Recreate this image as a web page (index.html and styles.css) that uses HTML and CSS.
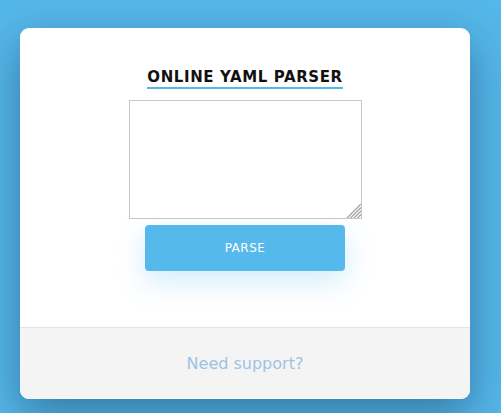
FILE: index.html
```html
<!DOCTYPE html>
<html>
<head>
<meta charset="utf-8">
<link rel="stylesheet" href="styles.css">
</head>
<body>
<div class="card">
  <div class="main">
    <h1 class="title">ONLINE YAML PARSER</h1>
    <div class="field">
      <textarea class="input"></textarea>
      <svg class="grip" width="15" height="15" viewBox="0 0 15 15">
        <g stroke="#a9a9a9" stroke-width="1.5">
          <line x1="1" y1="15" x2="15" y2="1"/>
          <line x1="4.5" y1="15" x2="15" y2="4.5"/>
          <line x1="8" y1="15" x2="15" y2="8"/>
          <line x1="11.5" y1="15" x2="15" y2="11.5"/>
        </g>
      </svg>
    </div>
    <button class="parse">PARSE</button>
  </div>
  <div class="footer">
    <a class="support">Need support?</a>
  </div>
</div>
</body>
</html>
```
FILE: styles.css
```css
html, body {
  margin: 0;
  height: 100%;
}
body {
  background: #55b7e9;
  font-family: "DejaVu Sans", sans-serif;
  padding: 28px 0 0 20px;
  box-sizing: border-box;
  overflow: hidden;
}
.card {
  width: 450px;
  background: #fff;
  border-radius: 9px;
  overflow: hidden;
  box-shadow: 0 16px 45px rgba(0, 30, 60, 0.4);
}
.main {
  display: flex;
  flex-direction: column;
  align-items: center;
  padding: 40px 0 56px;
}
.title {
  margin: 0;
  font-size: 15px;
  font-weight: bold;
  letter-spacing: 0.6px;
  color: #111;
  line-height: 18px;
  padding-bottom: 1px;
  border-bottom: 2px solid #55b7e9;
}
.field {
  position: relative;
  margin-top: 11px;
  width: 233px;
  height: 119px;
}
.input {
  display: block;
  width: 100%;
  height: 100%;
  box-sizing: border-box;
  border: 1px solid #c9c6c2;
  padding: 4px;
  resize: none;
  font-family: "DejaVu Sans", sans-serif;
}
.grip {
  position: absolute;
  right: 1px;
  bottom: 1px;
  background: #fff;
}
.parse {
  margin-top: 6px;
  width: 200px;
  height: 46px;
  border: none;
  border-radius: 4px;
  background: #56b9ec;
  color: #fff;
  font-family: "DejaVu Sans", sans-serif;
  font-size: 12px;
  letter-spacing: 0.5px;
  box-shadow: 0 10px 28px rgba(86, 185, 236, 0.28);
}
.footer {
  height: 71px;
  background: #f4f4f4;
  border-top: 1px solid #dde5ed;
  display: flex;
  align-items: center;
  justify-content: center;
}
.support {
  font-size: 16px;
  color: #9cc3e3;
}
```
